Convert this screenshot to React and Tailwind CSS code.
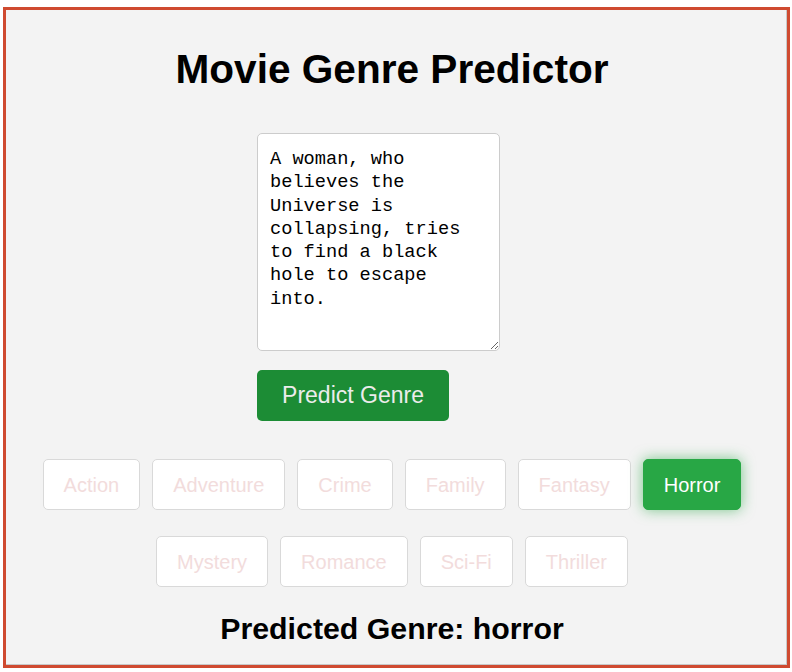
import React, { useState } from 'react';

const genres = ['Action', 'Adventure', 'Crime', 'Family', 'Fantasy', 'Horror', 'Mystery', 'Romance', 'Sci-Fi', 'Thriller'];

const plot = 'A woman, who believes the Universe is collapsing, tries to find a black hole to escape into.';

const App = () => {
    const [text, setText] = useState(plot);
    const [picked] = useState('Horror');

    return (
        <div className="min-h-screen bg-white pt-[7px] pl-[3px] font-['Liberation_Sans',Arial,sans-serif]">
            <div className="w-[787px] h-[661px] border-[3px] border-[#cf4a30] bg-[#f3f3f3] shadow-[inset_-1px_-1px_0_#c8c8c8] pr-[9px] flex flex-col items-center">
                <h1 className="mt-[36px] text-[40.6px] leading-[46px] font-bold text-black">Movie Genre Predictor</h1>

                {/* textarea + button sit a bit left of centre */}
                <div className="mt-[41px] mr-[27px] w-[243px] flex flex-col items-start">
                    <textarea
                        value={text}
                        onChange={e => setText(e.target.value)}
                        className="w-[243px] h-[218px] bg-white border border-[#cccccc] rounded-[5px] pt-[14px] px-[12px] font-['Liberation_Mono','DejaVu_Sans_Mono',monospace] text-[18.67px] leading-[23.3px] text-black outline-none"
                    />
                    <button className="mt-[19px] w-[192px] h-[51px] rounded-[5px] bg-[#1c8c35] text-[#ececec] text-[23px] leading-none">
                        Predict Genre
                    </button>
                </div>

                <div className="mt-[38px] max-w-[720px] flex flex-wrap justify-center gap-x-[12px] gap-y-[26px]">
                    {genres.map(g => (
                        g === picked ? (
                            <button
                                key={g}
                                className="h-[51px] px-[20px] rounded-[5px] border border-[#28a745] bg-[#28a745] text-white text-[20px] shadow-[0_0_14px_rgba(40,167,69,0.6)]"
                            >
                                {g}
                            </button>
                        ) : (
                            <button
                                key={g}
                                className="h-[51px] px-[20px] rounded-[5px] border border-[#d9d9d9] bg-white text-[#f2dcdc] text-[20px]"
                            >
                                {g}
                            </button>
                        )
                    ))}
                </div>

                <h2 className="mt-[25px] text-[30.3px] leading-[34.5px] font-bold text-black">Predicted Genre: horror</h2>
            </div>
        </div>
    );
};

export default App;
